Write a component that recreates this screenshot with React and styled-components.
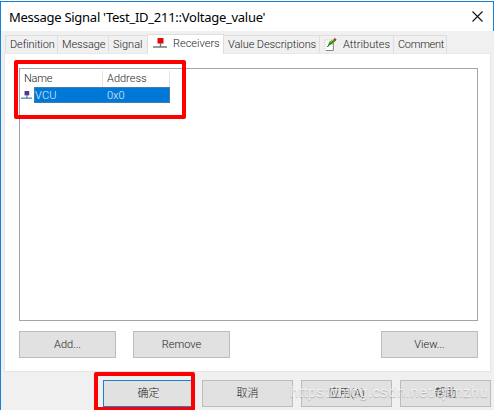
import React from "react";
import styled, { createGlobalStyle } from "styled-components";

const Global = createGlobalStyle`
  * { box-sizing: border-box; }
  body { margin: 0; background: #fff; overflow: hidden; }
`;

const Dialog = styled.div`
  position: relative;
  display: flex;
  flex-direction: column;
  width: 494px;
  height: 410px;
  margin-bottom: 1px;
  padding-top: 1px;
  background: #fff;
  overflow: hidden;
  font-family: "Roboto", "Liberation Sans", "Noto Sans CJK SC", sans-serif;
  font-size: 11px;
  color: #1c1c1c;
`;
const TitleBar = styled.header`
  display: flex;
  align-items: center;
  justify-content: space-between;
  height: 30px;
  padding: 0 10px 0 8px;
  border: 1px solid #1581d8;
  border-bottom: 0;
  background: #fff;
`;
const Title = styled.h1`
  margin: 0;
  font: 400 13px/20px "Noto Sans", sans-serif;
  letter-spacing: ${(p) => p.$spacing}px;
  color: #000;
  white-space: nowrap;
`;
const Body = styled.main`
  flex: 1;
  display: flex;
  flex-direction: column;
  padding: 3px 3px 0 3px;
  border-left: 1px solid #1581d8;
  background: #f0f0f0;
`;
const Tabs = styled.nav`
  display: flex;
  align-items: flex-end;
  height: 19px;
  padding-left: 1px;
`;
const Tab = styled.div`
  display: flex;
  align-items: center;
  gap: 6px;
  width: ${(p) => p.$width}px;
  height: ${(p) => (p.$active ? 20 : 18)}px;
  margin-bottom: ${(p) => (p.$active ? -1 : 0)}px;
  padding-left: ${(p) => (p.$active ? 5 : 4)}px;
  padding-bottom: ${(p) => (p.$active ? 2 : 0)}px;
  border: 1px solid #dedede;
  border-left-width: ${(p) => (p.$first ? 1 : 0)}px;
  border-bottom: 0;
  background: ${(p) => (p.$active ? "#fff" : "#f0f0f0")};
  z-index: ${(p) => (p.$active ? 1 : 0)};
  svg { flex: none; }
`;
const Label = styled.span`
  font-weight: 300;
  line-height: 15px;
  letter-spacing: ${(p) => p.$spacing || 0}px;
  white-space: nowrap;
`;
const Panel = styled.section`
  display: flex;
  flex-direction: column;
  width: 487px;
  height: 319px;
  padding: 14px 13px 0 14px;
  background: #fff;
  border: 1px solid #e6e6e6;
  border-top-color: #e8e8e8;
`;
const List = styled.div`
  height: 253px;
  width: 459px;
  padding: 2px 1px;
  border: 1px solid #a0a4ac;
`;
const Row = styled.div`
  display: grid;
  grid-template-columns: 13px 69px 67px;
  align-items: center;
  height: 16px;
`;
const HeaderRow = styled(Row)`
  grid-template-columns: 82px 67px;
`;
const HeaderCell = styled.div`
  height: 16px;
  padding-left: ${(p) => p.$pad}px;
  border-right: 1px solid #e4e4e4;
`;
const Cell = styled.div`
  height: 16px;
  padding-left: ${(p) => p.$pad}px;
  background: #0078d7;
  border: 1px solid #3f7eae;
  border-width: 1px ${(p) => (p.$last ? 1 : 0)}px 1px ${(p) => (p.$last ? 0 : 1)}px;
  color: #e6f3fc;
  line-height: 14px;
`;
const Actions = styled.div`
  display: flex;
  gap: 17px;
  padding-top: 10px;
  & > :last-child { margin-left: auto; margin-right: -1px; }
`;
const Button = styled.button`
  width: ${(p) => p.$width}px;
  height: 27px;
  padding: 0;
  border: ${(p) => (p.$primary ? "1px solid #1780d6" : "1px solid #bcbcbc")};
  background: #e1e1e1;
  font: inherit;
  color: inherit;
`;
const Footer = styled.footer`
  display: flex;
  gap: 8px;
  padding: 8px 0 0 99px;
`;
const Highlight = styled.div`
  position: absolute;
  left: ${(p) => p.$x}px;
  top: ${(p) => p.$y}px;
  width: ${(p) => p.$w}px;
  height: ${(p) => p.$h}px;
  border: 4px solid #fe0000;
  border-radius: 2px;
`;
const Watermark = styled.div`
  position: absolute;
  left: 290px;
  top: 382px;
  font: 15px/20px "Liberation Sans", sans-serif;
  letter-spacing: ${(p) => p.$spacing}px;
  color: rgba(255, 255, 255, 0.72);
  text-shadow: 0 1px 1px rgba(90, 90, 90, 0.35);
  white-space: nowrap;
`;

const NodeIcon = ({ size = 14, color = "#e00808", line = "#777" }) => (
  <svg width={size} height={size * 0.72} viewBox="0 0 14 10">
    <path d="M4.500 0h6v5.500h-6z" fill={color} />
    <path d="M7.500 5v4M0 9h14" stroke={line} strokeWidth="1.400" fill="none" />
  </svg>
);
const EditIcon = () => (
  <svg width="13" height="13" viewBox="0 0 13 13">
    <path d="M1 2h8v10.500h-8z" fill="#fff" stroke="#bbb" strokeWidth=".8" strokeDasharray="1 1" />
    <path d="M9.400 5v7.500H2" fill="none" stroke="#888" />
    <path d="M3.500 8.500l2-5 4.500-2.500 2 1.500-4 3.500z" fill="#219322" />
    <path d="M9.500 1.200l1.200-1.200 1.900 1.300-1.400 1.600z" fill="#d22" />
    <path d="M6 4.200l4-2.700" stroke="#b8cf2c" />
    <path d="M3.500 9l1-1.500" stroke="#333" />
  </svg>
);
const CloseIcon = () => (
  <svg width="11" height="11" viewBox="0 0 11 11">
    <path d="M.5.5l10 10M10.500.5l-10 10" stroke="#111" strokeWidth="1.100" />
  </svg>
);

export default function App() {
  return (
    <>
      <Global />
      <Dialog>
        <TitleBar>
          <Title $spacing={-0.27}>Message Signal 'Test_ID_211::Voltage_value'</Title>
          <CloseIcon />
        </TitleBar>
        <Body>
          <Tabs>
            <Tab $first $width={53}><Label $spacing={-0.1}>Definition</Label></Tab>
            <Tab $width={51}><Label $spacing={-0.1}>Message</Label></Tab>
            <Tab $width={39}><Label>Signal</Label></Tab>
            <Tab $width={76} $active><NodeIcon /><Label>Receivers</Label></Tab>
            <Tab $width={96}><Label $spacing={-0.08}>Value Descriptions</Label></Tab>
            <Tab $width={74}><EditIcon /><Label>Attributes</Label></Tab>
            <Tab $width={53}><Label $spacing={-0.3}>Comment</Label></Tab>
          </Tabs>
          <Panel>
            <List>
              <HeaderRow>
                <HeaderCell $pad={3}><Label $spacing={-0.2}>Name</Label></HeaderCell>
                <HeaderCell $pad={4}><Label>Address</Label></HeaderCell>
              </HeaderRow>
              <Row>
                <NodeIcon size={11} color="#53358c" line="#507eaa" />
                <Cell $pad={0}><Label $spacing={0.2}>VCU</Label></Cell>
                <Cell $pad={4} $last><Label>0x0</Label></Cell>
              </Row>
            </List>
            <Actions>
              <Button $width={97}><Label>Add...</Label></Button>
              <Button $width={97}><Label>Remove</Label></Button>
              <Button $width={97}><Label>View...</Label></Button>
            </Actions>
          </Panel>
          <Footer>
            <Button $width={91} $primary><Label>确定</Label></Button>
            <Button $width={91}><Label>取消</Label></Button>
            <Button $width={91}><Label>应用(A)</Label></Button>
            <Button $width={91}><Label>帮助</Label></Button>
          </Footer>
        </Body>
        <Highlight $x={14} $y={60} $w={172} $h={59} />
        <Highlight $x={94} $y={372} $w={101} $h={39} />
        <Watermark $spacing={0.38}>https://blog.csdn.net/qfmzhu</Watermark>
      </Dialog>
    </>
  );
}
